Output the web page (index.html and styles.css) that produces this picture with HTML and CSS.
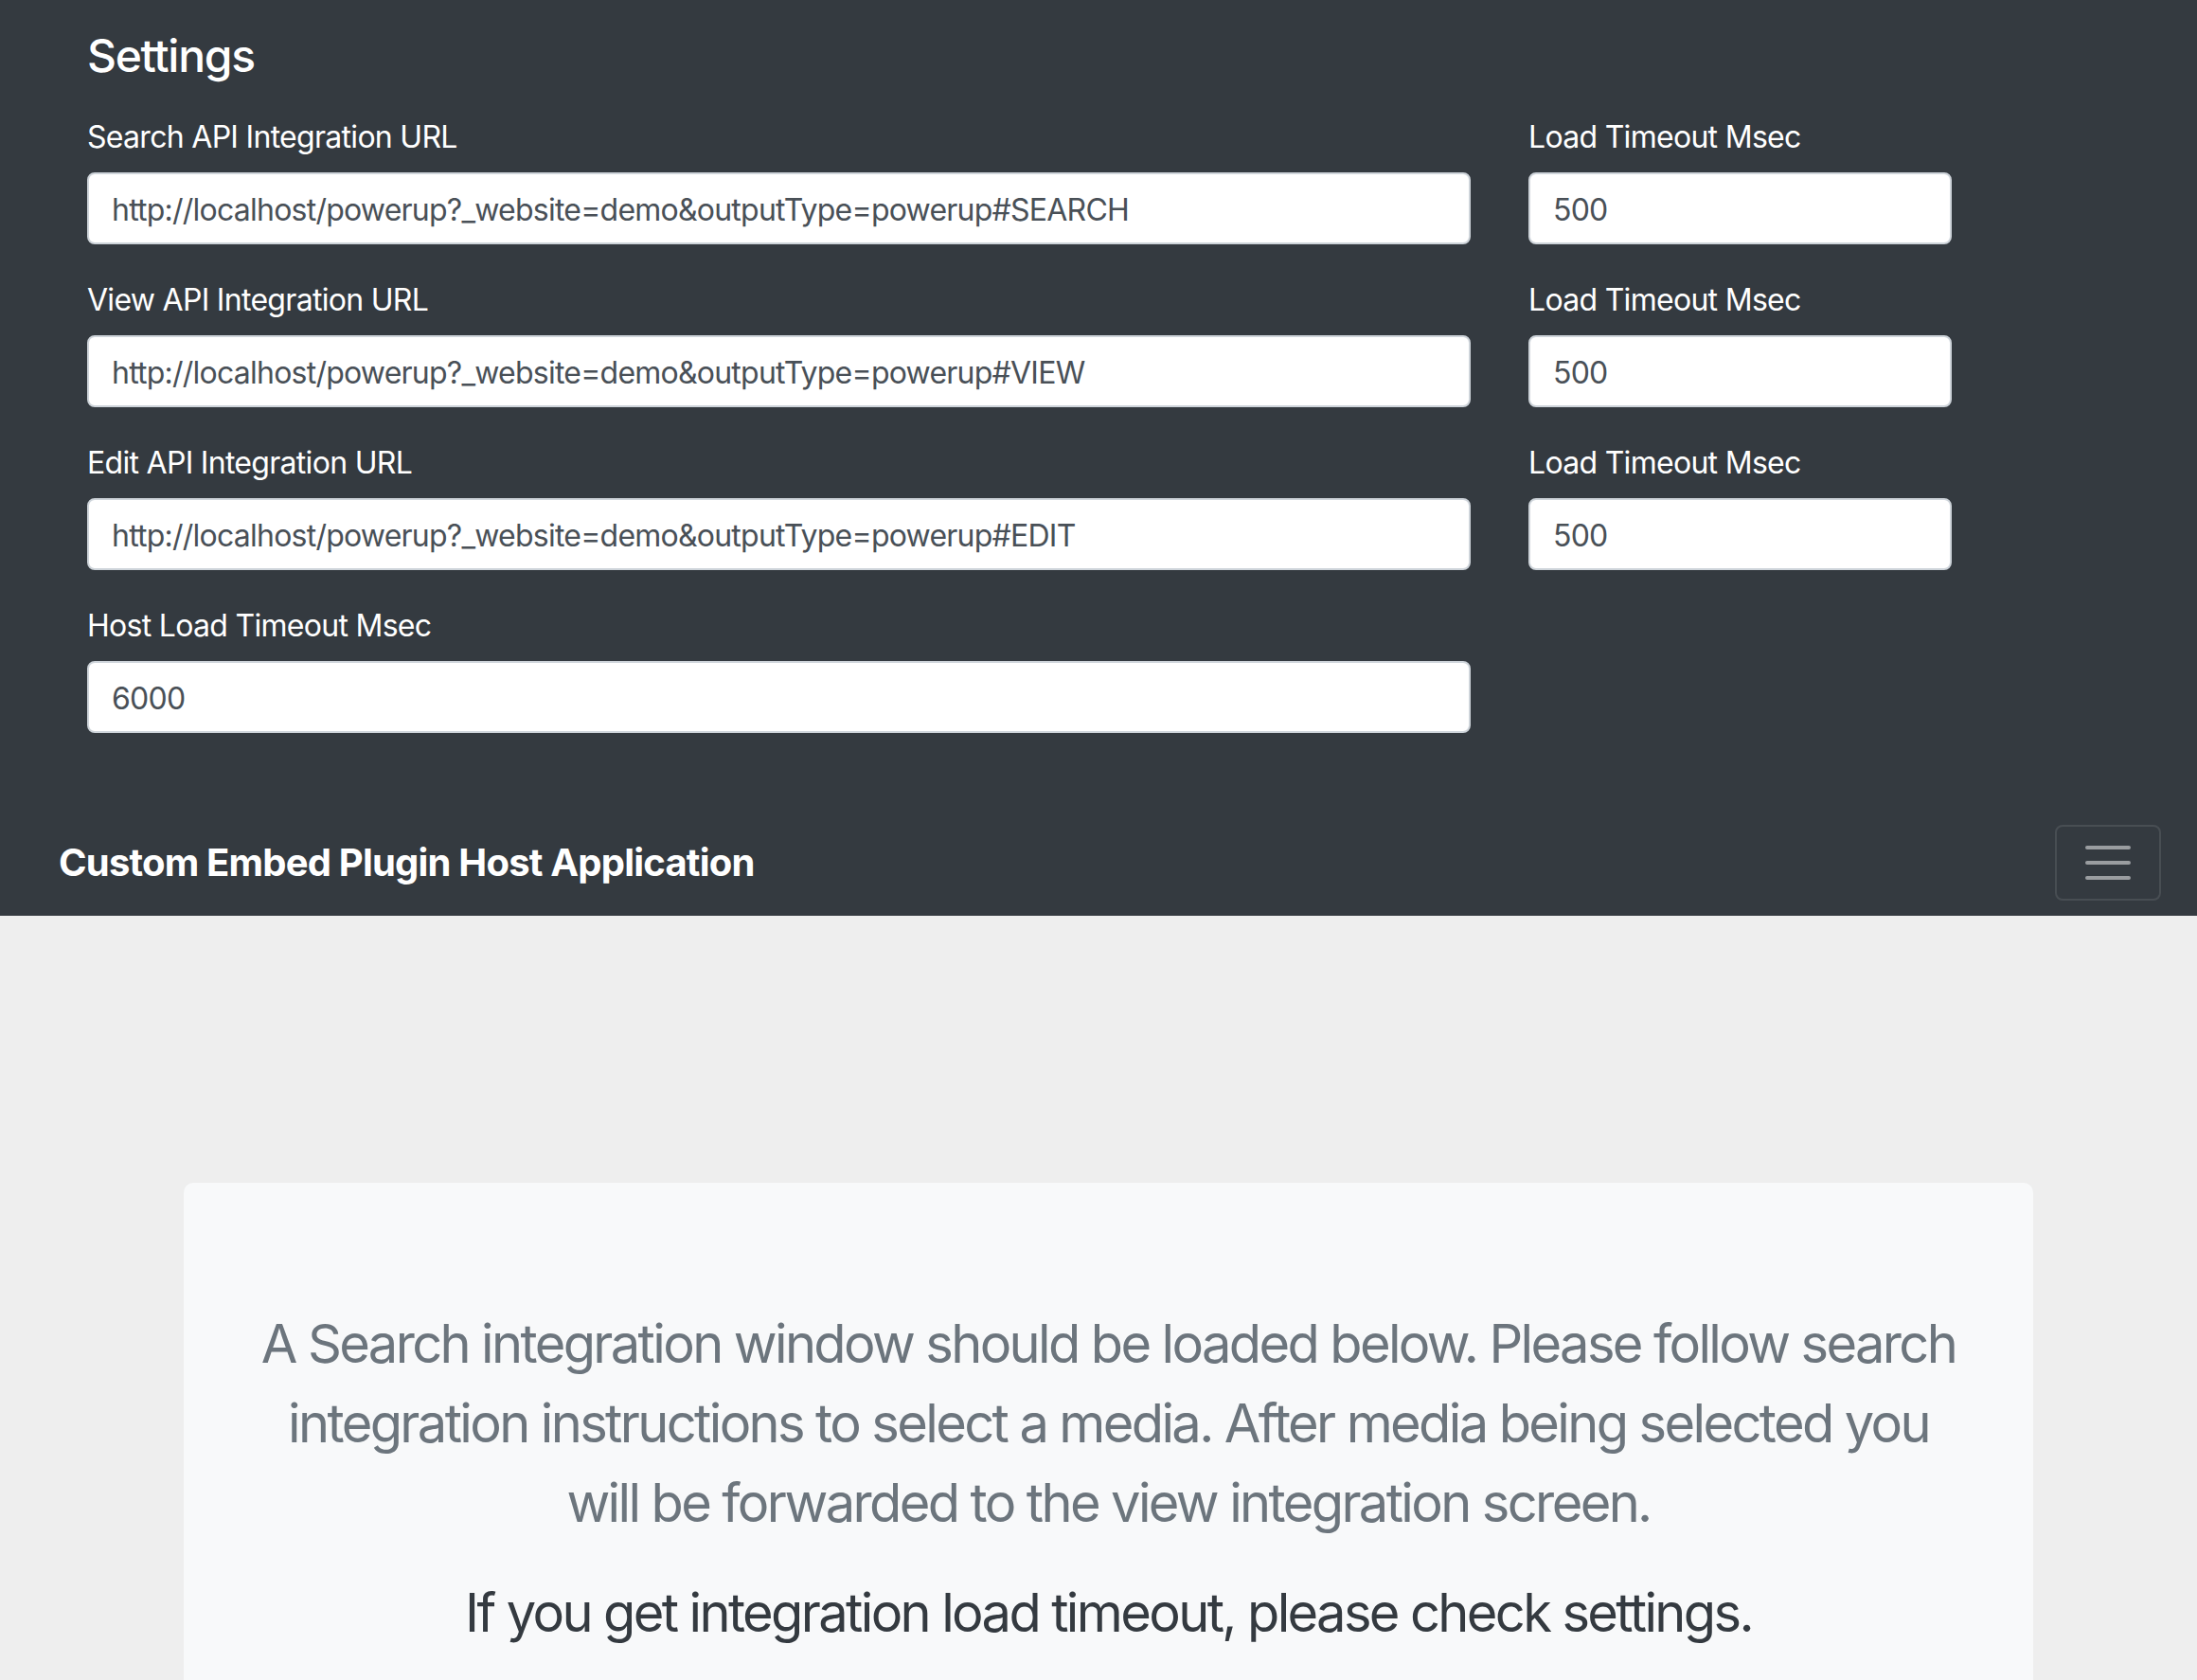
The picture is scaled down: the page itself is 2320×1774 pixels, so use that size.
FILE: index.html
```html
<!DOCTYPE html>
<html lang="en">
<head>
<meta charset="utf-8">
<title>Custom Embed Plugin Host Application</title>
<link rel="stylesheet" href="styles.css">
</head>
<body>
<header class="top">
  <section class="settings">
    <h4 class="settings-title">Settings</h4>
    <form class="settings-grid">
      <div class="field">
        <label class="field-label">Search API Integration URL</label>
        <input class="form-control" type="text" value="http://localhost/powerup?_website=demo&amp;outputType=powerup#SEARCH">
      </div>
      <div class="field">
        <label class="field-label">Load Timeout Msec</label>
        <input class="form-control" type="text" value="500">
      </div>
      <div class="field">
        <label class="field-label">View API Integration URL</label>
        <input class="form-control" type="text" value="http://localhost/powerup?_website=demo&amp;outputType=powerup#VIEW">
      </div>
      <div class="field">
        <label class="field-label">Load Timeout Msec</label>
        <input class="form-control" type="text" value="500">
      </div>
      <div class="field">
        <label class="field-label">Edit API Integration URL</label>
        <input class="form-control" type="text" value="http://localhost/powerup?_website=demo&amp;outputType=powerup#EDIT">
      </div>
      <div class="field">
        <label class="field-label">Load Timeout Msec</label>
        <input class="form-control" type="text" value="500">
      </div>
      <div class="field">
        <label class="field-label">Host Load Timeout Msec</label>
        <input class="form-control" type="text" value="6000">
      </div>
    </form>
  </section>
  <nav class="navbar">
    <span class="brand">Custom Embed Plugin Host Application</span>
    <button class="toggler" type="button" aria-label="Toggle navigation">
      <svg class="toggler-icon" viewBox="0 0 30 30" width="60" height="60">
        <path d="M4 7h22M4 15h22M4 23h22" stroke="rgba(255,255,255,0.5)" stroke-width="2" stroke-linecap="round" fill="none"/>
      </svg>
    </button>
  </nav>
</header>
<main class="main">
  <div class="jumbo">
    <p class="lead-muted"><span class="line">A Search integration window should be loaded below. Please follow search</span><span class="line">integration instructions to select a media. After media being selected you</span><span class="line">will be forwarded to the view integration screen.</span></p>
    <p class="lead-dark">If you get integration load timeout, please check settings.</p>
  </div>
</main>
</body>
</html>
```
FILE: styles.css
```css
* {
  box-sizing: border-box;
}

html, body {
  margin: 0;
  padding: 0;
}

body {
  background: #eeeeee;
  font-family: Inter, "Noto Sans", "Liberation Sans", sans-serif;
  color: #212529;
  min-height: 1774px;
}

.top {
  background: #343a40;
}

.settings {
  padding: 30px 0 49px 92px;
}

.settings-title {
  margin: 0 0 30px;
  font-size: 48px;
  line-height: 58px;
  font-weight: 500;
  letter-spacing: -0.027em;
  color: #ffffff;
}

.settings-grid {
  display: grid;
  grid-template-columns: 1461px 447px;
  column-gap: 61px;
  margin: 0;
}

.field {
  display: flex;
  flex-direction: column;
  margin-bottom: 32px;
}

.field-label {
  font-size: 32px;
  line-height: 48px;
  letter-spacing: -0.022em;
  color: #ffffff;
  padding-top: 3px;
  margin-bottom: 13px;
}

.form-control {
  display: block;
  width: 100%;
  height: 76px;
  padding: 13px 24px 11px;
  font-family: inherit;
  font-size: 32px;
  line-height: 48px;
  letter-spacing: -0.024em;
  color: #495057;
  background: #ffffff;
  border: 2px solid #ced4da;
  border-radius: 8px;
  outline: none;
}

.navbar {
  display: flex;
  align-items: center;
  justify-content: space-between;
  padding: 16px 38px 16px 62px;
}

.brand {
  font-size: 40px;
  line-height: 60px;
  font-weight: 700;
  letter-spacing: -0.02em;
  color: #ffffff;
}

.toggler {
  display: flex;
  align-items: center;
  justify-content: center;
  width: 112px;
  height: 80px;
  padding: 8px 24px;
  background: transparent;
  border: 2px solid rgba(255, 255, 255, 0.1);
  border-radius: 8px;
}

.toggler-icon {
  display: block;
  width: 60px;
  height: 60px;
}

.main {
  padding: 282px 0 0 194px;
}

.jumbo {
  width: 1953px;
  background: #f8f9fa;
  border-radius: 10px;
  padding: 128px 64px 96px;
  text-align: center;
}

.lead-muted,
.lead-dark {
  margin: 0 0 32px;
  font-size: 56px;
  line-height: 84px;
  font-weight: 400;
  letter-spacing: -0.047em;
  white-space: nowrap;
}

.line {
  display: block;
}

.lead-muted {
  color: #6c757d;
}

.lead-dark {
  color: #343a40;
}
```
